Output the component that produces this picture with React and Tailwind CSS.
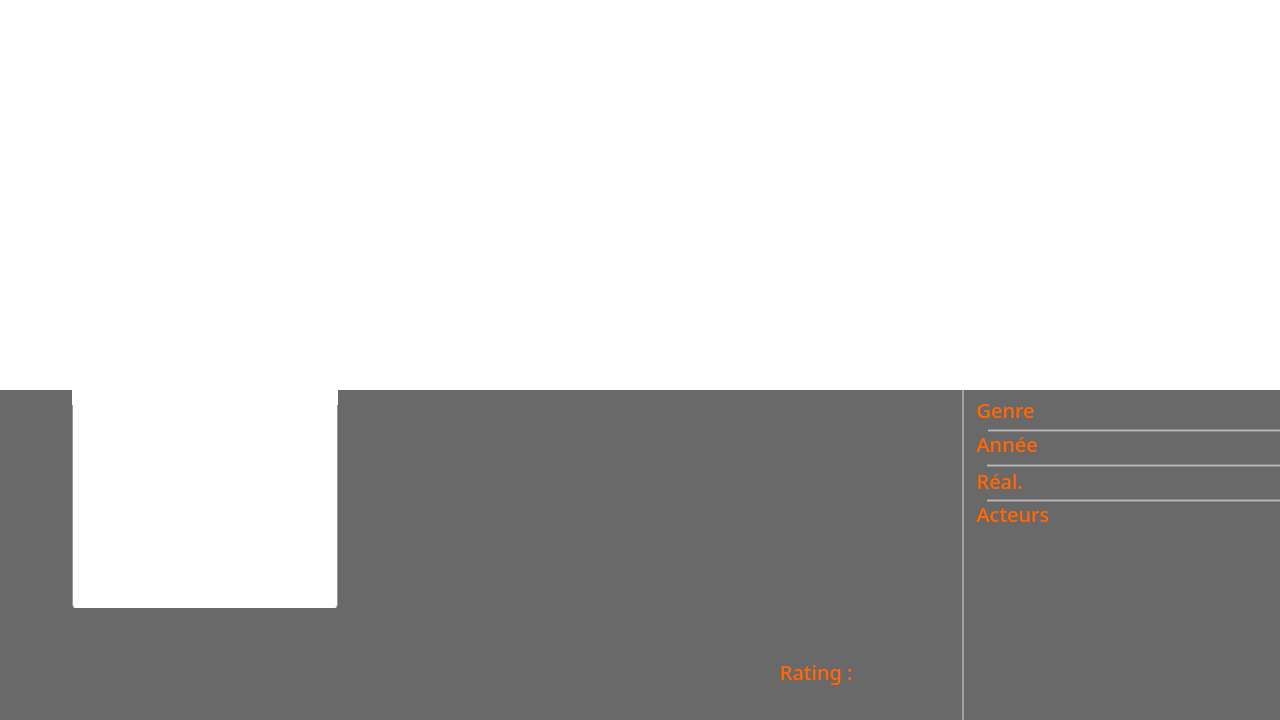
const details = [
  { label: "Genre", row: "h-[39px] pt-2", rule: "ml-[24px]" },
  { label: "Année", row: "h-8", rule: "ml-[23px]" },
  { label: "Réal.", row: "h-8 pt-0.5", rule: "ml-[23px]" },
  { label: "Acteurs", row: "h-8", rule: null },
];

function Poster() {
  return (
    <div className="ml-[72px] w-[266px] shrink-0">
      <div className="h-[15px] bg-white" />
      <div className="h-[203px] rounded-b-[4px] border-x border-b border-x-[#999999] border-b-white bg-white" />
    </div>
  );
}

export default function App() {
  return (
    <main className="flex min-h-screen flex-col bg-white font-['Noto_Sans',sans-serif] text-[20px] font-medium leading-[26px] text-[#ff6600]">
      <div className="grow" />
      <section className="flex min-h-[330px] bg-[#696969]">
        <Poster />
        <div className="flex grow items-end justify-end pr-[110px] pb-[34px]">
          <p>Rating :</p>
        </div>
        <dl className="w-[318px] shrink-0 border-l-2 border-[#a0a0a0]">
          {details.map(({ label, row, rule }) => (
            <div key={label}>
              <dt className={`${row} pl-3`}>{label}</dt>
              {rule && (
                <dd className={`${rule} h-[3px] border-y border-[#8b8b8b] bg-[#b9b9b9]`} />
              )}
            </div>
          ))}
        </dl>
      </section>
    </main>
  );
}
